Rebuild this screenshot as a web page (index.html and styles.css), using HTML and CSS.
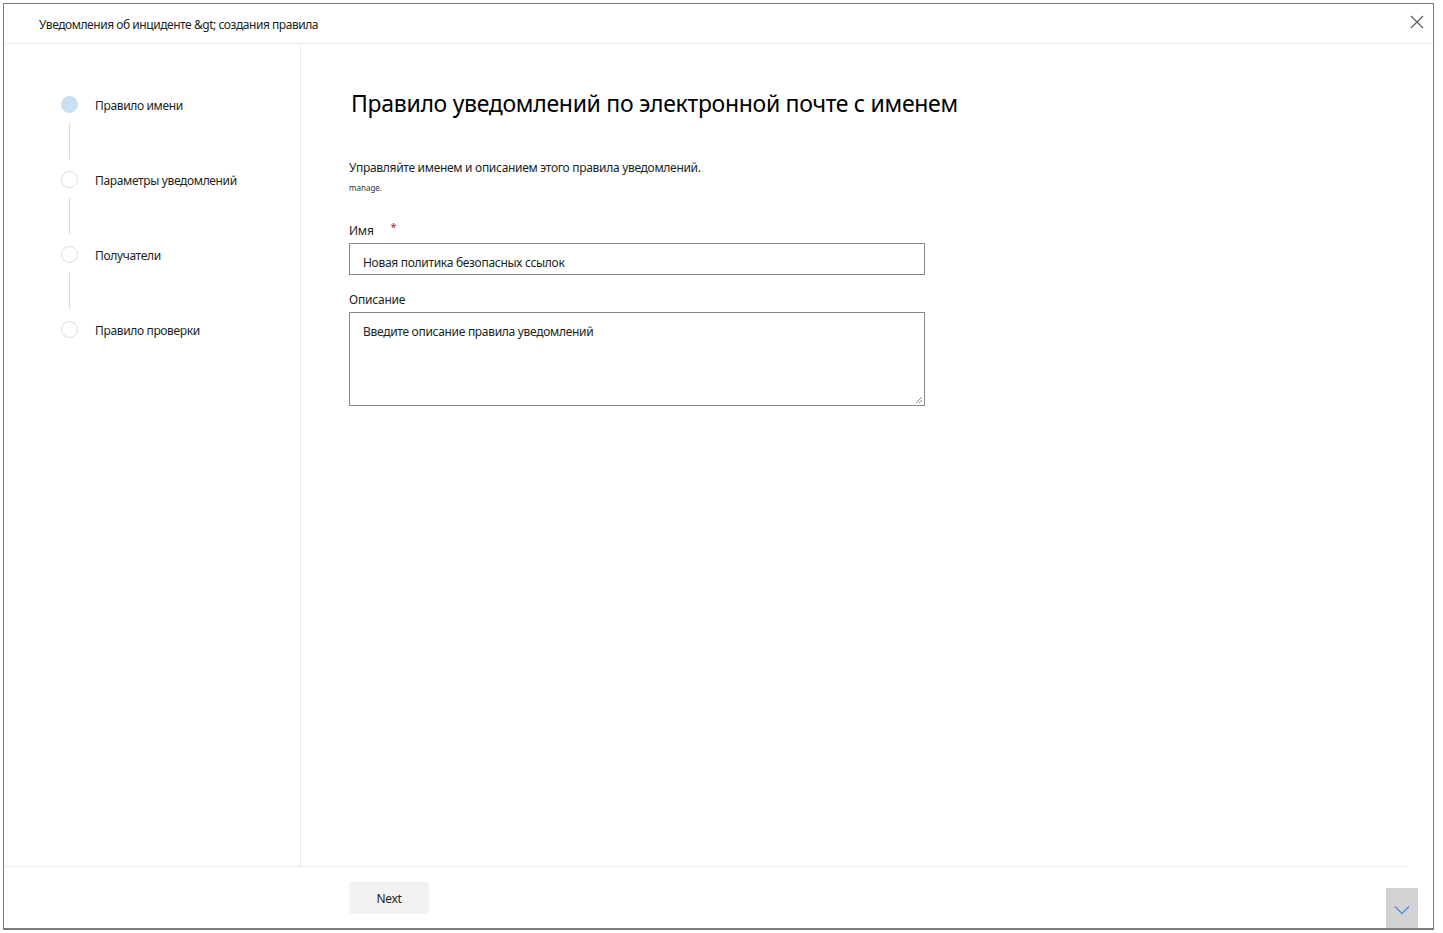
FILE: index.html
```html
<!DOCTYPE html>
<html lang="ru">
<head>
<meta charset="utf-8">
<title>Правило уведомлений</title>
<link rel="stylesheet" href="styles.css">
</head>
<body>
<div class="panel">
  <header class="panel-header">
    <div class="crumb">Уведомления об инциденте &amp;gt; создания правила</div>
    <button class="close" aria-label="Закрыть">
      <svg width="14" height="14" viewBox="0 0 14 14"><path d="M1 1 L13 13 M13 1 L1 13" stroke="#5a5a5a" stroke-width="1.2" fill="none"/></svg>
    </button>
  </header>
  <div class="panel-body">
    <nav class="steps">
      <div class="step active"><span class="dot"></span><span class="label">Правило имени</span></div>
      <div class="connector"></div>
      <div class="step"><span class="dot"></span><span class="label">Параметры уведомлений</span></div>
      <div class="connector"></div>
      <div class="step"><span class="dot"></span><span class="label">Получатели</span></div>
      <div class="connector"></div>
      <div class="step"><span class="dot"></span><span class="label">Правило проверки</span></div>
    </nav>
    <main class="content">
      <h1 class="title">Правило уведомлений по электронной почте с именем</h1>
      <p class="desc">Управляйте именем и описанием этого правила уведомлений.</p>
      <p class="note">manage.</p>
      <label class="field-label">Имя <span class="req">*</span></label>
      <div class="input">Новая политика безопасных ссылок</div>
      <label class="field-label">Описание</label>
      <div class="textarea">Введите описание правила уведомлений
        <svg class="grip" width="9" height="9" viewBox="0 0 9 9"><path d="M8 2 L2 8 M8 5 L5 8" stroke="#8a8a8a" stroke-width="1"/></svg>
      </div>
    </main>
  </div>
  <footer class="panel-footer">
    <button class="next">Next</button>
  </footer>
  <button class="scroll-down" aria-label="Вниз">
    <svg width="16" height="10" viewBox="0 0 16 10"><path d="M1 1.5 L8 8.5 L15 1.5" stroke="#4a90d9" stroke-width="1.3" fill="none"/></svg>
  </button>
</div>
</body>
</html>
```
FILE: styles.css
```css
* { box-sizing: border-box; }
html, body { margin: 0; padding: 0; background: #fff; }
body {
  font-family: "Segoe UI", "Noto Sans", "Liberation Sans", sans-serif;
  color: #201f1e;
  padding: 3px;
}
.panel {
  position: relative;
  width: 1431px;
  height: 927px;
  border: 1px solid #7a7a7a;
  border-bottom-width: 2px;
  display: flex;
  flex-direction: column;
}
.panel-header {
  height: 40px;
  flex: none;
  display: flex;
  align-items: center;
  justify-content: space-between;
  padding: 0 9px 0 35px;
  border-bottom: 1px solid #ebebeb;
}
.crumb {
  font-size: 12px;
  letter-spacing: -0.45px;
  color: #201f1e;
  margin-top: 2px;
}
.close {
  border: 0;
  background: none;
  padding: 0;
  width: 14px;
  height: 14px;
  margin-top: -4px;
  display: flex;
}
.panel-body {
  flex: 1;
  display: flex;
  min-height: 0;
}
.steps {
  width: 297px;
  flex: none;
  border-right: 1px solid #ebebeb;
  padding: 52px 0 0 57px;
  display: flex;
  flex-direction: column;
}
.step {
  display: flex;
  align-items: center;
  height: 16px;
}
.dot {
  width: 17px;
  height: 17px;
  border-radius: 50%;
  border: 1px solid #dcdcdc;
  background: #fff;
  flex: none;
}
.step.active .dot {
  background: #c7e0f4;
  border-color: #c7e0f4;
}
.label {
  margin-left: 17px;
  font-size: 12px;
  letter-spacing: -0.35px;
  color: #201f1e;
  margin-top: 3px;
}
.connector {
  width: 1px;
  height: 36px;
  background: #dcdcdc;
  margin: 11px 0 12px 8px;
}
.content {
  flex: 1;
  padding: 43px 0 0 48px;
}
.title {
  margin: 0 0 0 2px;
  font-size: 23px;
  font-weight: 400;
  letter-spacing: -0.3px;
  line-height: 32px;
  color: #000;
}
.desc {
  margin: 41px 0 0;
  font-size: 12px;
  letter-spacing: -0.3px;
  line-height: 16px;
}
.note {
  margin: 6px 0 0;
  font-size: 8px;
  line-height: 12px;
  color: #323130;
}
.field-label {
  display: block;
  font-size: 12px;
  letter-spacing: -0.2px;
  line-height: 16px;
  margin-top: 29px;
}
.req { color: #a4262c; margin-left: 14px; position: relative; top: -4px; font-size: 11px; }
.input {
  margin-top: 4px;
  width: 576px;
  height: 32px;
  border: 1px solid #8a8886;
  font-size: 12px;
  letter-spacing: -0.3px;
  padding: 11px 0 0 13px;
  line-height: 16px;
}
.input + .field-label { margin-top: 17px; }
.textarea {
  position: relative;
  margin-top: 4px;
  width: 576px;
  height: 94px;
  border: 1px solid #8a8886;
  font-size: 12px;
  letter-spacing: -0.3px;
  padding: 11px 0 0 13px;
  line-height: 16px;
}
.grip { position: absolute; right: 1px; bottom: 1px; }
.panel-footer {
  height: 62px;
  flex: none;
  border-top: 1px solid #ebebeb;
  margin-right: 25px;
  padding: 15px 0 0 345px;
}
.next {
  width: 80px;
  height: 32px;
  border: 0;
  border-radius: 2px;
  background: #f3f2f1;
  font-family: inherit;
  font-size: 12px;
  letter-spacing: -0.3px;
  color: #201f1e;
  padding: 0;
}
.scroll-down {
  position: absolute;
  right: 15px;
  bottom: 0;
  width: 32px;
  height: 40px;
  border: 0;
  background: #d2d2d2;
  display: flex;
  align-items: center;
  justify-content: center;
  padding: 4px 0 0;
}
```
